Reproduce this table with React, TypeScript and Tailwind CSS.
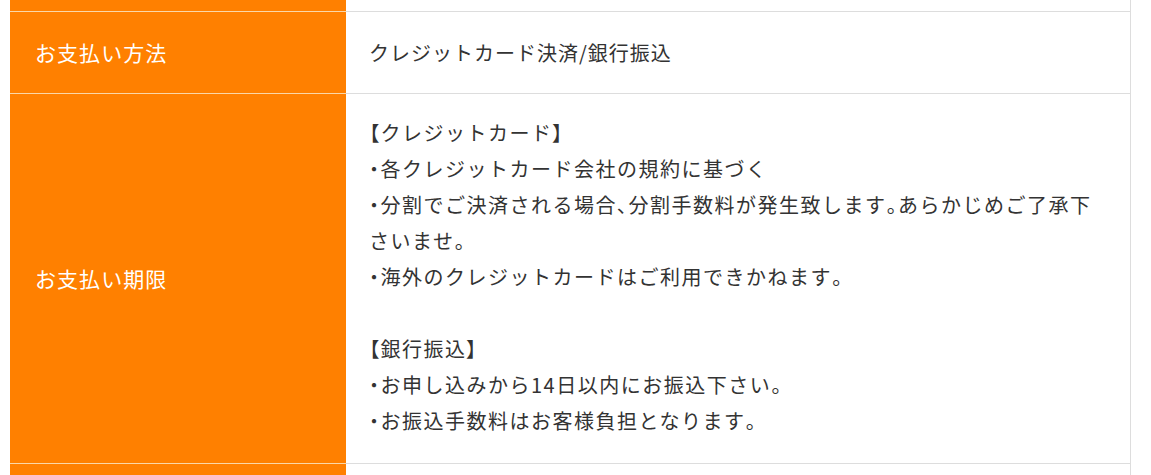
const FONT = "font-['Noto_Sans_CJK_JP','Noto_Sans',sans-serif]";

const detailLines = [
  "【クレジットカード】",
  "・各クレジットカード会社の規約に基づく",
  "・分割でご決済される場合、分割手数料が発生致します。あらかじめご了承下さいませ。",
  "・海外のクレジットカードはご利用できかねます。",
  "",
  "【銀行振込】",
  "・お申し込みから14日以内にお振込下さい。",
  "・お振込手数料はお客様負担となります。",
];

// punctuation is set proportionally in the original
function Tight({ text }: { text: string }) {
  return (
    <>
      {text.split(/([・【】、。])/).map((part, i) =>
        /^[・【】、。]$/.test(part) ? (
          <span key={i} className="[font-feature-settings:'palt']">
            {part}
          </span>
        ) : (
          part
        )
      )}
    </>
  );
}

function Row({
  label,
  children,
  className,
}: {
  label?: string;
  children?: React.ReactNode;
  className?: string;
}) {
  return (
    <div className={`flex ${className ?? ""}`}>
      <div className="w-[336px] shrink-0 bg-[#ff8000] flex items-center px-[25px] text-white text-[21px] tracking-[0.05em] border-t border-[#fbd7a8]">
        {label}
      </div>
      <div className="flex-1 flex items-center px-[23px] text-[#333333] text-[20px] leading-[36px] tracking-[0.05em] border-t border-[#dddddd]">
        {children}
      </div>
    </div>
  );
}

export default function App() {
  return (
    <div className={`w-[1151px] h-[475px] overflow-hidden bg-white ${FONT}`}>
      <div className="ml-[10px] w-[1121px] border-r border-[#dddddd] -mt-px">
        <Row className="h-[12px]" />
        <Row label="お支払い方法" className="h-[82px]">
          クレジットカード決済/銀行振込
        </Row>
        <Row label="お支払い期限" className="h-[370px]">
          <div className="pt-[2px] pb-[6px] tracking-[1.5px]">
            {detailLines.map((line, i) =>
              line ? (
                <div key={i}>
                  <Tight text={line} />
                </div>
              ) : (
                <div key={i} className="h-[36px]" />
              )
            )}
          </div>
        </Row>
        <Row className="h-[40px]" />
      </div>
    </div>
  );
}
